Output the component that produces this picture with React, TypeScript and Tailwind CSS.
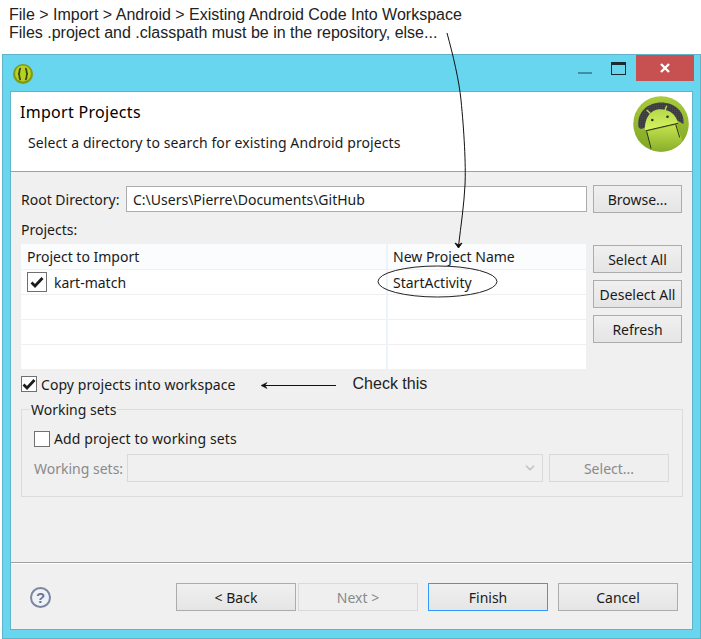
import { ChevronDown } from "lucide-react";

const ui = "font-['Noto_Sans',sans-serif] text-[14px] text-[#1a1a1a]";

const Btn = ({ label, className = "" }: { label: string; className?: string }) => (
  <div className={`flex items-center justify-center border border-[#acacac] bg-gradient-to-b from-[#f0f0f0] to-[#e5e5e5] ${className}`}>
    {label}
  </div>
);

const DisabledBtn = ({ label, className = "" }: { label: string; className?: string }) => (
  <div className={`flex items-center justify-center border border-[#d9d9d9] bg-[#efefef] text-[#8a8a8a] ${className}`}>
    {label}
  </div>
);

const Check = () => (
  <svg viewBox="0 0 14 12" className="h-3 w-[14px]">
    <path d="M1.5 6.5 L5 10 L12.5 2" fill="none" stroke="#1c1c1c" strokeWidth="2.8" />
  </svg>
);

const Row = ({ name = "", project = "" }: { name?: string; project?: string }) => (
  <div className="flex h-[25px] border-b border-[#f0f0f0] bg-white">
    <div className="flex w-[365px] items-center gap-[7px] pl-[6px]">
      {name && (
        <>
          <div className="flex h-5 w-5 items-center justify-center border border-[#707070] bg-white">
            <Check />
          </div>
          <span>{name}</span>
        </>
      )}
    </div>
    <div className="flex flex-1 items-center border-l-2 border-[#eef3fa] pl-[5px]">{project}</div>
  </div>
);

const AndroidLogo = () => (
  <svg viewBox="0 0 56 56" className="h-14 w-14">
    <defs>
      <linearGradient id="rim" x1="0" y1="0" x2="0" y2="1">
        <stop offset="0" stopColor="#a9cb3c" />
        <stop offset="1" stopColor="#7ea523" />
      </linearGradient>
      <linearGradient id="head" x1="0" y1="0" x2="0" y2="1">
        <stop offset="0" stopColor="#b6d84a" />
        <stop offset="1" stopColor="#d6f460" />
      </linearGradient>
      <linearGradient id="body" x1="0" y1="0" x2="0" y2="1">
        <stop offset="0" stopColor="#c4e34f" />
        <stop offset="1" stopColor="#7fa524" />
      </linearGradient>
      <pattern id="mesh" width="2" height="2" patternUnits="userSpaceOnUse">
        <rect width="2" height="2" fill="#4b4b4e" />
        <path d="M0 0.5 H2 M0.5 0 V2" stroke="#38383a" strokeWidth="0.6" />
      </pattern>
      <clipPath id="disc">
        <circle cx="28" cy="28" r="27.6" />
      </clipPath>
    </defs>
    <circle cx="28" cy="28" r="27.8" fill="url(#rim)" />
    <path d="M5.5 31 C3.5 16 15 6.5 28 6.5 C41 6.5 52 15 50.5 28 C48 27 45 24 42 24 L13 31 C11 31 8.5 35 5.5 31 Z" fill="url(#mesh)" />
    <g clipPath="url(#disc)">
      <path d="M13.7 35.5 L42.7 29 L48.7 42 L50 60 L18 60 Z" fill="url(#body)" />
      <path d="M12 34.7 C11 22 18 13.3 27 13.3 C36 13.3 43 18 45 27.3 Z" fill="url(#head)" />
      <path d="M12.5 34.8 L45 27.3" stroke="#2e3118" strokeWidth="1" />
      <path d="M13.7 35.5 L18 52.5 M42.7 28.5 L46.7 41.5" fill="none" stroke="#2e3118" strokeWidth="1" />
    </g>
    <path d="M13.7 14 L18 18 M33.7 9.7 L31.5 15.7" stroke="#bcdc4a" strokeWidth="1.4" />
    <circle cx="19.3" cy="24" r="1.3" fill="#2e3118" />
    <circle cx="34.5" cy="20.7" r="1.3" fill="#2e3118" />
  </svg>
);

const EclipseIcon = () => (
  <svg viewBox="0 0 20 20" className="h-5 w-5">
    <circle cx="10" cy="10" r="10" fill="#7f9a14" />
    <circle cx="10" cy="9.5" r="8" fill="#b5d122" />
    <path d="M8 4.5 Q6.5 4.5 6.5 7 Q6.5 10 5 10 Q6.5 10 6.5 13 Q6.5 15.5 8 15.5 M12 4.5 Q13.5 4.5 13.5 7 Q13.5 10 15 10 Q13.5 10 13.5 13 Q13.5 15.5 12 15.5" fill="none" stroke="#39440f" strokeWidth="1.7" />
  </svg>
);

export default function App() {
  return (
    <div className={`relative h-[639px] w-[701px] overflow-hidden bg-white ${ui}`}>
      {/* note on top */}
      <div className="h-[54px] pl-[9px] pt-[6px] font-['Liberation_Sans',sans-serif] text-[16px] leading-[18px] text-[#222]">
        <div>File &gt; Import &gt; Android &gt; Existing Android Code Into Workspace</div>
        <div>Files .project and .classpath must be in the repository, else...</div>
      </div>

      {/* window */}
      <div className="ml-[2px] flex h-[585px] w-[699px] flex-col border border-[#5fb4c9] bg-[#68d6ef] px-[7px] pb-2">
        <div className="flex h-[36px] shrink-0 items-start">
          <div className="ml-[3px] mt-[9px]">
            <EclipseIcon />
          </div>
          <div className="ml-auto -mr-[1px] flex items-start">
            <div className="mr-[19px] mt-[17px] h-[2px] w-[14px] bg-[#3f8ea3]" />
            <div className="mr-[10px] mt-[7px] h-[13px] w-[15px] border border-[#1a2a33] border-t-[3px]" />
            <div className="flex h-[26px] w-[58px] items-center justify-center bg-[#c75050]">
              <svg viewBox="0 0 10 10" className="h-[10px] w-[10px]">
                <path d="M1 1 L9 9 M9 1 L1 9" stroke="white" strokeWidth="2.4" />
              </svg>
            </div>
          </div>
        </div>

        <div className="flex flex-1 flex-col border border-[#5fb4c9] bg-[#f0f0f0]">
          {/* header */}
          <div className="relative h-[79px] shrink-0 bg-white px-[9px] pt-[8px]">
            <div className="text-[16px] leading-[24px] tracking-[0.3px] text-black">Import Projects</div>
            <div className="ml-2 mt-[9px] leading-[20px] tracking-[0.1px]">Select a directory to search for existing Android projects</div>
            <div className="absolute right-[3px] top-[4px]">
              <AndroidLogo />
            </div>
          </div>

          <div className="flex flex-1 flex-col border-t border-[#a0a0a0] pl-[10px] pr-[10px]">
            <div className="mt-[13px] flex items-center">
              <span className="w-[105px]">Root Directory:</span>
              <div className="flex h-[26px] w-[461px] items-center border border-[#acacac] bg-white pl-[6px]">
                C:\Users\Pierre\Documents\GitHub
              </div>
              <Btn label="Browse..." className="ml-[6px] h-7 w-[89px]" />
            </div>
            <div className="mt-[7px] leading-[20px]">Projects:</div>

            <div className="mt-[4px] flex">
              <div className="h-[125px] w-[565px] shrink-0 overflow-hidden bg-white">
                <div className="flex h-[26px] border-b border-[#eef1f5] bg-[#fbfcfd]">
                  <div className="flex w-[365px] items-center pl-[6px]">Project to Import</div>
                  <div className="flex flex-1 items-center border-l-2 border-[#eef3fa] pl-[5px]">New Project Name</div>
                </div>
                <Row name="kart-match" project="StartActivity" />
                <Row />
                <Row />
                <Row />
              </div>
              <div className="ml-[7px] mt-[1px] flex flex-col gap-[7px]">
                <Btn label="Select All" className="h-7 w-[89px]" />
                <Btn label="Deselect All" className="h-7 w-[89px]" />
                <Btn label="Refresh" className="h-7 w-[89px]" />
              </div>
            </div>

            <div className="mt-[3px] flex items-center gap-[4px]">
              <div className="flex h-4 w-4 items-center justify-center border border-[#707070] bg-white">
                <Check />
              </div>
              <span className="tracking-[0.07px]">Copy projects into workspace</span>
              <span className="ml-[113px] font-['Liberation_Sans',sans-serif] text-[16px] text-[#222]">Check this</span>
            </div>

            {/* working sets */}
            <div className="relative mt-[13px] h-[88px] w-[662px] border border-[#dcdcdc] px-3 pt-[18px]">
              <span className="absolute -top-[9px] left-2 bg-[#f0f0f0] px-[1px] leading-[18px]">Working sets</span>
              <div className="flex items-center gap-[4px]">
                <div className="h-4 w-4 border border-[#707070] bg-white" />
                <span className="tracking-[0.1px]">Add project to working sets</span>
              </div>
              <div className="mt-[5px] flex items-center text-[#8a8a8a]">
                <span className="w-[93px]">Working sets:</span>
                <div className="flex h-7 w-[416px] items-center justify-end border border-[#d9d9d9] pr-[5px]">
                  <ChevronDown size={14} strokeWidth={3} className="text-[#c4c4c4]" />
                </div>
                <DisabledBtn label="Select..." className="ml-[6px] h-7 w-[120px]" />
              </div>
            </div>

            <div className="flex-1" />
          </div>

          {/* footer */}
          <div className="flex h-[67px] shrink-0 border-t border-[#a0a0a0] pl-[19px] pr-[14px] shadow-[inset_0_1px_0_#fff]">
            <div className="mt-[24px] flex h-[21px] w-[21px] items-center justify-center rounded-full border-2 border-[#7a86a0] bg-[#eef1f6] font-['Liberation_Sans',sans-serif] text-[15px] font-bold leading-none text-[#6a7690]">
              ?
            </div>
            <div className="ml-auto mt-[20px] flex">
              <Btn label="< Back" className="h-7 w-[120px]" />
              <DisabledBtn label="Next >" className="ml-[2px] h-7 w-[120px]" />
              <Btn label="Finish" className="ml-[10px] h-7 w-[120px] !border-[#3399ff]" />
              <Btn label="Cancel" className="ml-[10px] h-7 w-[120px]" />
            </div>
          </div>
        </div>
      </div>

      {/* annotations drawn on top */}
      <svg className="pointer-events-none absolute left-0 top-0" width="701" height="639" viewBox="0 0 701 639">
        <path d="M447 33 C453 55 459 80 461 100 C464 130 466 165 465 185 C464 205 461 225 458.5 246" fill="none" stroke="#111" strokeWidth="1" />
        <path d="M455 243 L458.5 248 L462 243 L458.5 245 Z" fill="#111" stroke="#111" />
        <ellipse cx="437.5" cy="281.5" rx="59.5" ry="15.5" fill="none" stroke="#222" strokeWidth="1" />
        <path d="M262 385.5 L336 385.5" stroke="#111" strokeWidth="1" />
        <path d="M267 382.5 L261 385.5 L267 388.5 L265 385.5 Z" fill="#111" stroke="#111" strokeWidth="0.5" />
      </svg>
    </div>
  );
}
